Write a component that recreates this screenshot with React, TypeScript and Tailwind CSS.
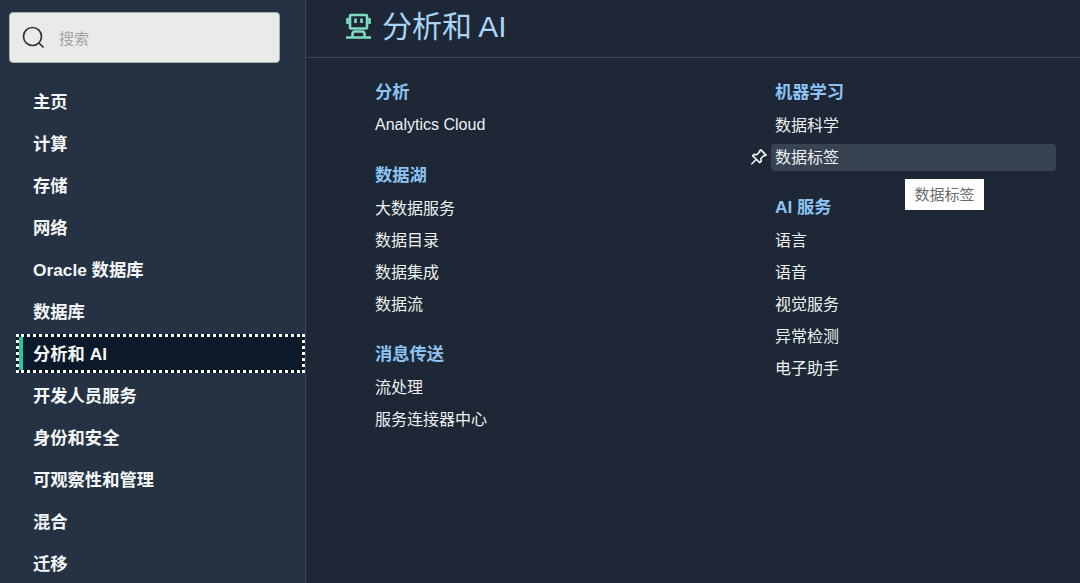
import React from "react";

const nav = ["主页", "计算", "存储", "网络", "Oracle 数据库", "数据库", "分析和 AI", "开发人员服务", "身份和安全", "可观察性和管理", "混合", "迁移"];

function Heading({ children }: { children: React.ReactNode }) {
  return <div className="h-[33px] leading-[35px] text-[17.3px] font-bold text-[#8cc3f2]">{children}</div>;
}
function Row({ children }: { children: React.ReactNode }) {
  return <div className="h-[32px] leading-[36px] text-[16px] text-[#eef1f3]">{children}</div>;
}

export default function App() {
  return (
    <div className="relative flex h-[583px] w-[1080px] overflow-hidden bg-[#1d2735] font-['Liberation_Sans','Noto_Sans_CJK_SC',sans-serif]">
      <aside className="w-[306px] shrink-0 border-r border-[#3a4553] bg-[#253243]">
        <div className="pt-[12px] pl-[9px]">
          <div className="flex h-[51px] w-[271px] items-center rounded-[4px] border border-[#a6adb5] bg-[#eaeae8] pl-[12px]">
            <svg width="24" height="24" viewBox="0 0 24 24" fill="none" stroke="#333" strokeWidth="1.7">
              <circle cx="10.5" cy="10.5" r="9" />
              <path d="M17 17l4.5 4.5" />
            </svg>
            <span className="ml-[13px] pt-[4px] text-[15px] text-[#a3a3a1]">搜索</span>
          </div>
        </div>
        <nav className="mt-[17px]">
          {nav.map((n) =>
            n === "分析和 AI" ? (
              <div key={n} className="mt-[2px] mb-[1px] ml-[16px] h-[39px] border-[3px] border-dotted border-white bg-[#0b1929]">
                <div className="flex h-full items-center border-l-[4px] border-[#2fc2a0] pl-[10px] pt-[3px] text-[17.3px] font-bold text-[#f4f6f8]">
                  {n}
                </div>
              </div>
            ) : (
              <div key={n} className="flex h-[42px] items-center pl-[33px] pt-[4px] text-[17.3px] font-bold text-[#f4f6f8]">
                {n}
              </div>
            ),
          )}
        </nav>
      </aside>
      <main className="flex-1">
        <header className="flex h-[58px] items-start border-b border-[#3a4553] pl-[39px]">
          <svg className="mt-[13px]" width="27" height="27" viewBox="0 0 27 27" fill="none" stroke="#7fdcc4" strokeWidth="2.6">
            <rect x="5" y="2" width="17" height="13.500" rx="1" />
            <path d="M2.500 5v6M24.500 5v6M10.500 5.500v4.500M16.500 5.500v4.500" />
            <path d="M7.500 24v-3q0-2.500 2.500-2.500h7q2.500 0 2.500 2.500v3M1 24.500h25" />
          </svg>
          <h1 className="ml-[10px] text-[30px] leading-[53px] text-[#a9d4f5] [word-spacing:-2px]">分析和 AI</h1>
        </header>
        <div className="flex pl-[69px] pt-[17px]">
          <div className="w-[400px]">
            <Heading>分析</Heading>
            <div className="h-[32px] leading-[34px] text-[16px] text-[#eef1f3]">Analytics Cloud</div>
            <div className="mt-[18px]">
              <Heading>数据湖</Heading>
              <Row>大数据服务</Row>
              <Row>数据目录</Row>
              <Row>数据集成</Row>
              <Row>数据流</Row>
            </div>
            <div className="mt-[18px]">
              <Heading>消息传送</Heading>
              <Row>流处理</Row>
              <Row>服务连接器中心</Row>
            </div>
          </div>
          <div className="w-[281px]">
            <Heading>机器学习</Heading>
            <Row>数据科学</Row>
            <div className="relative h-[32px]">
              <svg className="absolute left-[-25px] top-[8px]" width="18" height="18" viewBox="0 0 24 24" fill="none" stroke="#f2f4f6" strokeWidth="2.2" strokeLinejoin="round" strokeLinecap="round">
                <path d="M14.500 2.500l7 7-2 1-1-.5-4 4 .5 3.500-2 2-4.500-4.500-6 6 6-6L3.500 10.500l2-2 3.500.5 4-4-.5-1z" />
              </svg>
              <div className="absolute left-[-4px] top-[4px] h-[27px] w-[285px] rounded-[4px] bg-[#384352]" />
              <div className="relative h-[32px] leading-[36px] text-[16px] text-[#eef1f3]">数据标签</div>
            </div>
            <div className="mt-[18px]">
              <Heading>AI 服务</Heading>
              <Row>语言</Row>
              <Row>语音</Row>
              <Row>视觉服务</Row>
              <Row>异常检测</Row>
              <Row>电子助手</Row>
            </div>
          </div>
        </div>
      </main>
      <div className="absolute left-[905px] top-[179px] flex h-[31px] w-[79px] items-center justify-center bg-white pt-[2px] text-[15px] text-[#6b6b6b]">
        数据标签
      </div>
    </div>
  );
}
